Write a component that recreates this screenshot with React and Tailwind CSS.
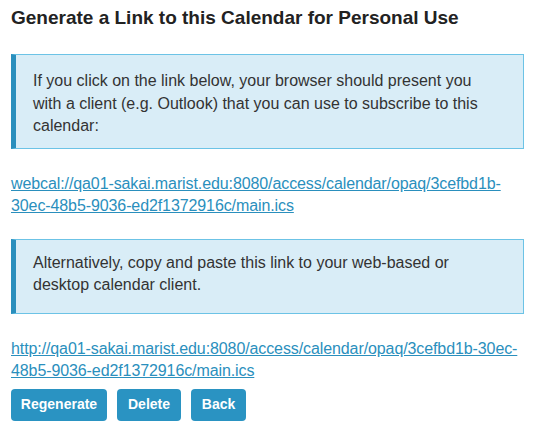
export default function App() {
  const webcal =
    "webcal://qa01-sakai.marist.edu:8080/access/calendar/opaq/3cefbd1b-30ec-48b5-9036-ed2f1372916c/main.ics";
  const http =
    "http://qa01-sakai.marist.edu:8080/access/calendar/opaq/3cefbd1b-30ec-48b5-9036-ed2f1372916c/main.ics";

  const buttons = [
    { label: "Regenerate", width: "w-[96px]" },
    { label: "Delete", width: "w-[64px]" },
    { label: "Back", width: "w-[55px]" },
  ];

  return (
    <div className="min-h-screen bg-white pl-[11px] pr-[17px] pt-[6px] font-['Liberation_Sans',Arial,sans-serif] text-[16px] leading-[22.5px] text-[#333]">
      <h2 className="text-[19px] font-bold leading-[24px] text-[#222]">
        Generate a Link to this Calendar for Personal Use
      </h2>

      <div className="mt-[24px] border border-l-[5px] border-[#6cc3e6] border-l-[#2a8fbd] bg-[#d9edf7] px-[17px] pt-[15px] pb-[10px]">
        If you click on the link below, your browser should present you
        <br />
        with a client (e.g. Outlook) that you can use to subscribe to this
        <br />
        calendar:
      </div>

      <p className="mt-[24px]">
        <a href="#" className="text-[#2a8fbd] underline tracking-[-0.1px]">
          {webcal}
        </a>
      </p>

      <div className="mt-[21px] border border-l-[5px] border-[#6cc3e6] border-l-[#2a8fbd] bg-[#d9edf7] px-[17px] pt-[12px] pb-[16px]">
        Alternatively, copy and paste this link to your web-based or
        <br />
        desktop calendar client.
      </div>

      <p className="mt-[24px]">
        <a href="#" className="text-[#2a8fbd] underline tracking-[-0.1px]">
          {http}
        </a>
      </p>

      <div className="mt-[6px] flex gap-[10px]">
        {buttons.map((b) => (
          <button
            key={b.label}
            className={`${b.width} h-[32px] rounded-[4px] bg-[#2a93c2] text-center text-[14px] font-bold text-white`}
          >
            {b.label}
          </button>
        ))}
      </div>
    </div>
  );
}
